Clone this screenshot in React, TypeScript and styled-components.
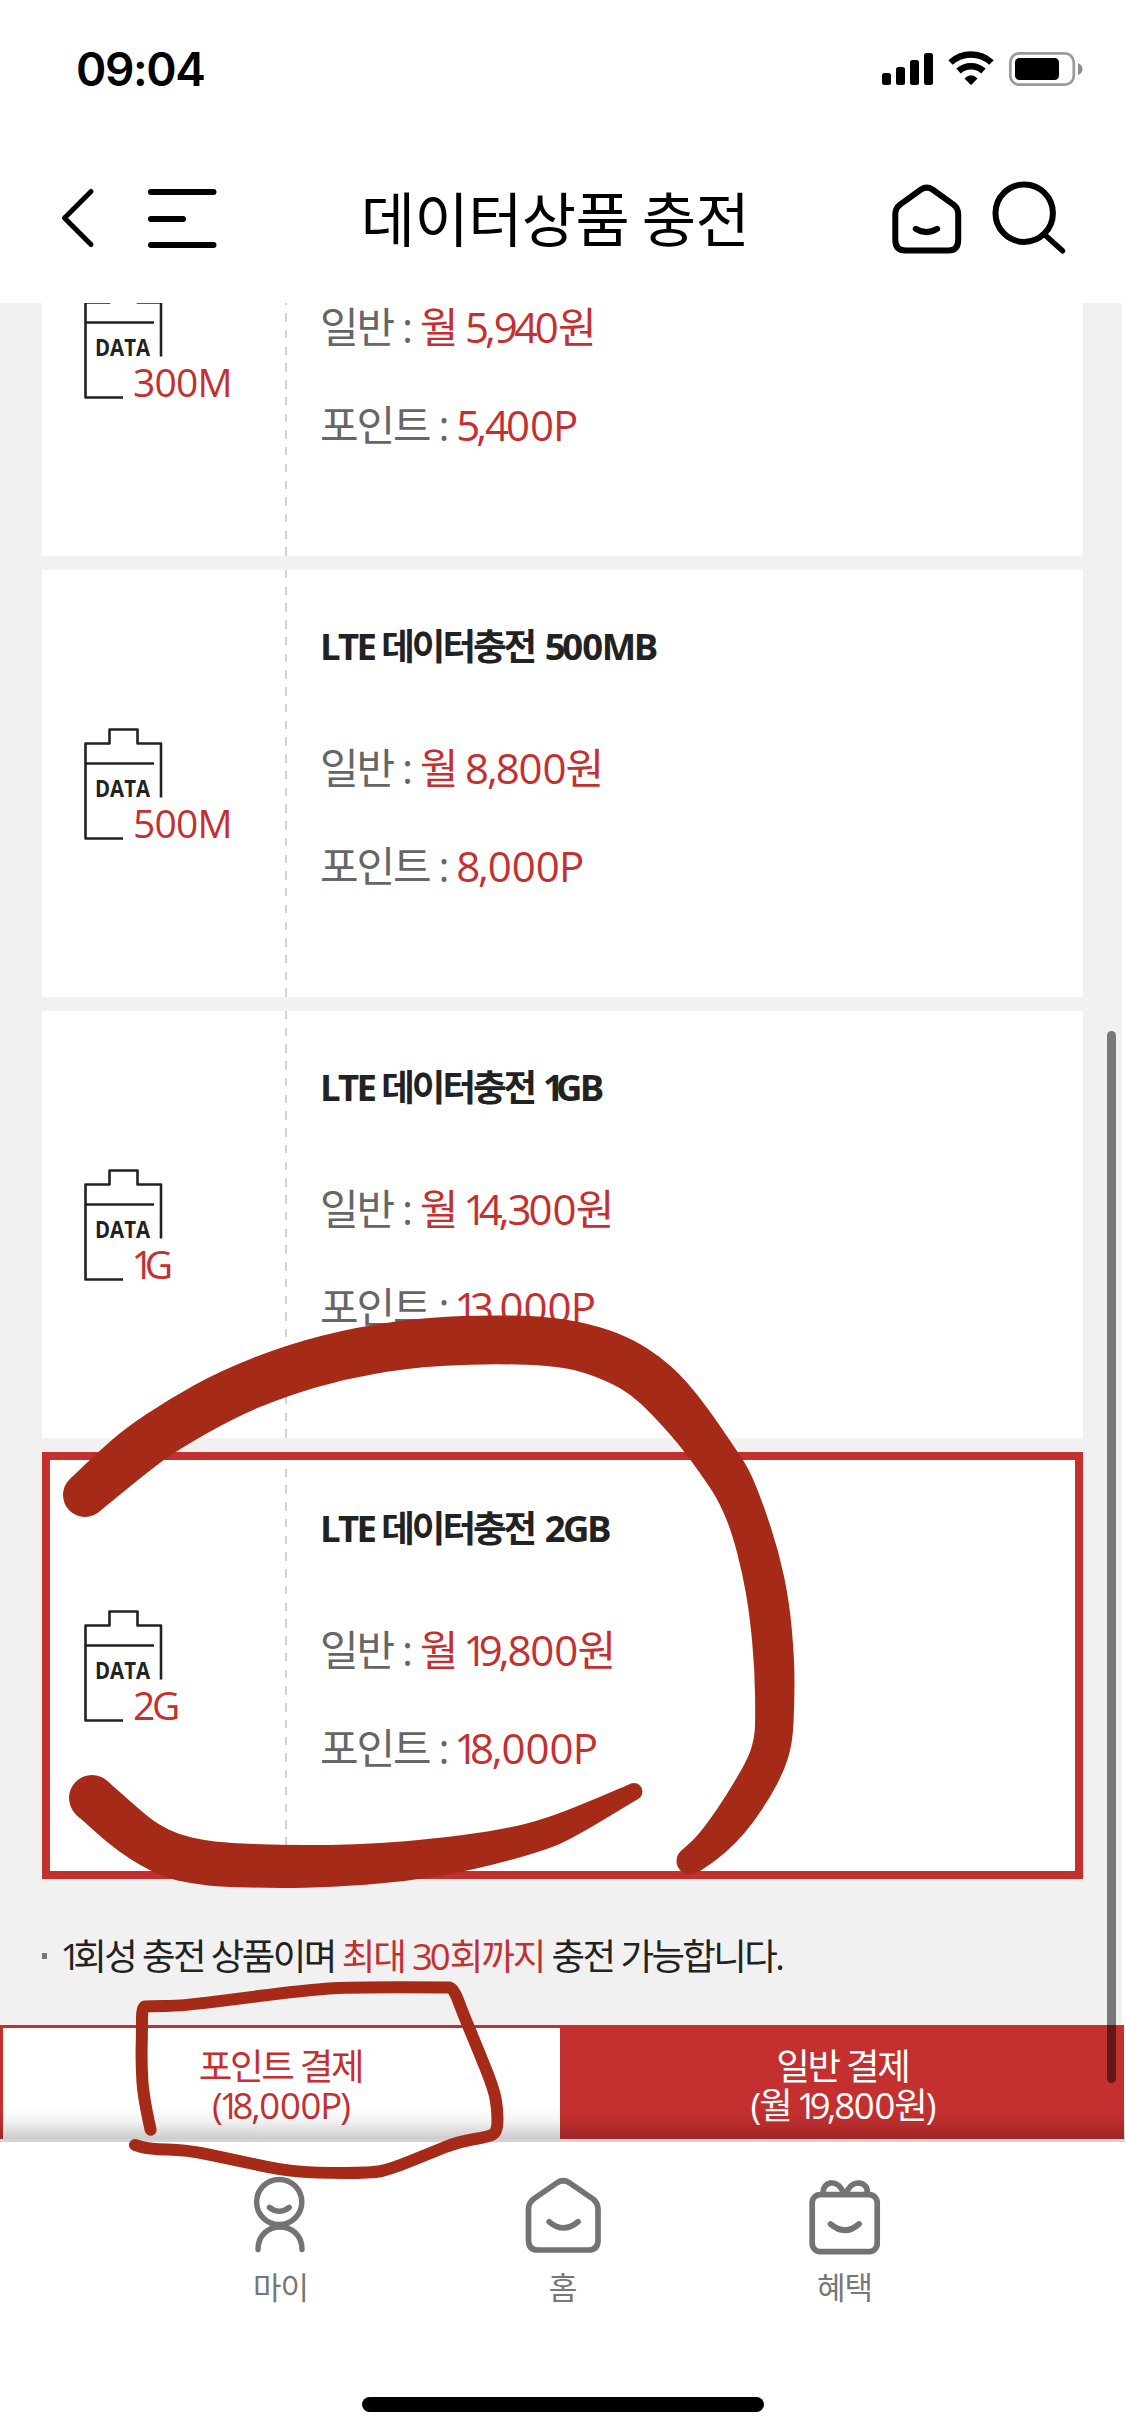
import React from "react";
import styled, { createGlobalStyle } from "styled-components";

const RED = "#c43030";
const INK = "#a52a17";
const GRAY = "#737373";

const GlobalStyle = createGlobalStyle`
  * { box-sizing: border-box; }
  body { margin: 0; background: #fff; }
`;

const Screen = styled.div`
  position: relative;
  display: flex;
  flex-direction: column;
  width: 1125px;
  height: 2436px;
  overflow: hidden;
  background: #fff;
  color: #222;
  font-family: "Open Sans", "Noto Sans CJK KR", sans-serif;
`;

const StatusBar = styled.div`
  display: flex;
  justify-content: space-between;
  height: 132px;
  padding: 42px 42px 0 76px;
`;

const Clock = styled.div`
  height: 54px;
  line-height: 54px;
  font-family: Inter, sans-serif;
  font-size: 46px;
  font-weight: 600;
  letter-spacing: -1.4px;
  color: #000;
`;

const StatusIcons = styled.svg`
  width: 202px;
  height: 36px;
  margin-top: 9px;
`;

const Header = styled.header`
  display: grid;
  grid-template-columns: 300px 1fr 300px;
  align-items: center;
  height: 171px;
`;

const HeaderIcons = styled.svg`
  display: block;
  width: 300px;
  height: 171px;
`;

const PageTitle = styled.h1`
  margin: 0 0 0 -15px;
  padding-bottom: 1px;
  text-align: center;
  font-family: "Noto Sans CJK KR", sans-serif;
  font-size: 59px;
  font-weight: 400;
  line-height: 80px;
  letter-spacing: -0.6px;
  color: #000;
`;

const Content = styled.main`
  height: 1722px;
  overflow: hidden;
  padding: 0 39.5px 0 42px;
  border-right: 3px solid #fff;
  background: #f1f1f1;
`;

const ProductList = styled.ul`
  display: flex;
  flex-direction: column;
  gap: 14px;
  margin: -174px 0 0;
  padding: 0;
  list-style: none;
`;

const Card = styled.li<{ $selected?: boolean }>`
  display: grid;
  grid-template-columns: 243px 2px 1fr;
  height: 427px;
  background: #fff;
  outline: ${(p) => (p.$selected ? `8.5px solid ${RED}` : "none")};
  outline-offset: -8.5px;
`;

const IconCell = styled.div`
  display: grid;
  padding: 157px 0 0 41px;
  align-content: start;
`;

const Divider = styled.div`
  background: repeating-linear-gradient(#d2d2d2 0 8.4px, transparent 8.4px 16.74px);
`;

const Info = styled.div`
  padding: 52px 0 0 33px;
`;

const ProductName = styled.h2`
  margin: 0 0 62px;
  height: 48px;
  line-height: 48px;
  font-size: 36.5px;
  font-weight: 600;
  white-space: pre;
`;

const PriceRow = styled.div`
  height: 98px;
  line-height: 72px;
  font-size: 42px;
  color: #666;
  white-space: pre;
`;

const Run = styled.span<{ $ls: number; $color?: string }>`
  letter-spacing: ${(p) => p.$ls}px;
  color: ${(p) => p.$color || "inherit"};
`;

const Latin = styled.span`
  font-weight: 700;
`;

const Figure = styled.span<{ $before?: number; $after: number }>`
  margin-left: ${(p) => p.$before || 0}em;
  margin-right: ${(p) => p.$after}em;
`;

const BatterySvg = styled.svg`
  display: block;
  width: 180px;
  height: 120px;
  overflow: visible;
`;

const Note = styled.p`
  display: flex;
  align-items: center;
  gap: 15px;
  margin: 50px 0 0;
  height: 54px;
  font-size: 36.5px;
  line-height: 54px;
  white-space: pre;
`;

const Bullet = styled.i`
  width: 5px;
  height: 6px;
  background: #777;
`;

const PayBar = styled.div`
  position: relative;
  display: grid;
  grid-template-columns: 560px 564px;
  height: 117px;
  border-bottom: 3px solid #d3d3d3;

  &::after {
    content: "";
    position: absolute;
    inset: auto 0 0 0;
    height: 30px;
    background: linear-gradient(rgba(0, 0, 0, 0), rgba(0, 0, 0, 0.05) 40%, rgba(0, 0, 0, 0.2));
  }
`;

const PayButton = styled.button<{ $filled?: boolean }>`
  display: flex;
  flex-direction: column;
  align-items: center;
  margin: 0;
  padding: 19px 2px 0 0;
  border: solid ${RED};
  border-width: 3px 0 0 3px;
  border-radius: 0;
  background: ${(p) => (p.$filled ? RED : "#fff")};
  color: ${(p) => (p.$filled ? "#fff" : RED)};
  font: inherit;
  font-size: 36.5px;
  line-height: 39px;
  white-space: pre;
`;

const Nav = styled.nav`
  display: grid;
  grid-template-columns: repeat(3, 282px);
  justify-content: center;
  height: 255px;
  padding-top: 28px;
`;

const NavItem = styled.div`
  display: flex;
  flex-direction: column;
  align-items: center;
  color: #777;
  font-family: "Noto Sans CJK KR", sans-serif;
  font-size: 31px;
  font-weight: 400;
  letter-spacing: -1px;
  line-height: 46px;

  svg {
    width: 92px;
    height: 92px;
    margin-bottom: 1px;
  }
`;

const HomeIndicator = styled.div`
  align-self: center;
  width: 402px;
  height: 15px;
  border-radius: 8px;
  background: #000;
`;

const ScrollThumb = styled.div`
  position: absolute;
  left: 1107px;
  top: 1031px;
  width: 9px;
  height: 1052px;
  border-radius: 5px;
  background: rgba(0, 0, 0, 0.5);
`;

const InkLayer = styled.svg`
  position: absolute;
  inset: 0;
  width: 1125px;
  height: 2436px;
  pointer-events: none;
`;

type Point = [number, number];

/* Smooths a list of points with midpoint quadratic segments; a repeated point is passed through exactly. */
const smooth = (pts: Point[], closed: boolean): string => {
  const mid = (a: Point, b: Point): Point => [(a[0] + b[0]) / 2, (a[1] + b[1]) / 2];
  const n = pts.length;
  if (closed) {
    const start = mid(pts[n - 1], pts[0]);
    return (
      `M${start}` + pts.map((p, i) => `Q${p} ${mid(p, pts[(i + 1) % n])}`).join("") + "Z"
    );
  }
  return (
    `M${pts[0]}` +
    pts.slice(1, -1).map((p, i) => `Q${p} ${mid(p, pts[i + 2])}`).join("") +
    `L${pts[n - 1]}`
  );
};

const UPPER: Point[] = [
  [85, 1495], [70.5, 1478.5], [70.5, 1478.5], [97, 1453], [125.5, 1428], [168.6, 1399.5], [218.8, 1371.5], [287, 1344.5],
  [358.7, 1326.5], [430.4, 1317], [495, 1315], [552.4, 1316.5], [602.6, 1327], [634.9, 1340.5],
  [659, 1356], [682, 1376], [707, 1407], [733, 1445], [749, 1469], [762, 1500.8], [778.6, 1550.6],
  [789.5, 1602.4], [794.5, 1660.4], [794.5, 1702], [792.5, 1743.4], [784, 1771], [770, 1797.3],
  [753.5, 1822], [737, 1842], [716, 1860.3], [699, 1871.5], [699, 1871.5], [690, 1861],
  [681, 1851], [681, 1851], [697, 1836.7],
  [717, 1809.7], [736.5, 1778.6], [749, 1755.8], [754, 1739.2], [755.4, 1722.6], [754.7, 1668.7],
  [749.6, 1614.8], [742.5, 1573.4], [731.7, 1532], [719.5, 1503], [706.6, 1482.2], [678, 1442.8],
  [649.2, 1411.7], [631.3, 1395], [609.8, 1382.2], [573.9, 1368.8], [538, 1365], [495, 1364],
  [444.8, 1365.3], [401.7, 1369.4], [344.3, 1379], [287, 1396], [236.7, 1416.5], [179.3, 1449],
  [150.6, 1469.7], [99.5, 1511.5], [99.5, 1511.5],
];

const LOWER: Point[] = [
  [92, 1798], [75.5, 1814], [75.5, 1814], [118.4, 1852.5], [161.4, 1877], [193.7, 1884], [222.4, 1886.8],
  [279.8, 1888.3], [330, 1887], [401.7, 1882.3], [473.5, 1870.2], [545.2, 1850.5], [575, 1837],
  [638.8, 1798.5], [638.8, 1798.5], [634, 1791.5], [629.5, 1784.2], [629.5, 1784.2],
  [548.8, 1818.5], [495, 1831], [430.4, 1839],
  [380.2, 1843.3], [330, 1845], [279.8, 1845], [229.6, 1842.9], [204.4, 1840.4], [179.3, 1834.6],
  [157.8, 1824.2], [143.5, 1813], [108.5, 1782], [108.5, 1782],
];

const BOX: Point[] = [
  [150.6, 2129.8], [143.5, 2098.3], [141.3, 2064], [142, 2030], [142, 2006.5], [148, 2006.3], [183, 2005.8],
  [247.5, 1997.4], [315.6, 1989.2], [351.5, 1987.3], [444.8, 1987.3], [453.4, 1987.6], [462.7, 2012.8],
  [477, 2047], [493.5, 2088], [497.5, 2108.5], [497.5, 2132], [488, 2137], [459, 2141.5],
  [430.4, 2153], [391, 2169], [371.6, 2173], [315.6, 2173], [279.8, 2169.7], [229.6, 2158.8],
  [186.5, 2149.8], [148.5, 2149.2], [135, 2145],
];

const products = [
  { size: "300M", name: "300MB", won: "5,940", point: "5,400P" },
  { size: "500M", name: "500MB", won: "8,800", point: "8,000P" },
  { size: "1G", name: "1GB", won: "14,300", point: "13,000P" },
  { size: "2G", name: "2GB", won: "19,800", point: "18,000P", selected: true },
];

/* Sets figures proportionally: a narrow 1, a wide 0, the rest slightly tight. */
const Figures = ({ children }: { children: string }) => (
  <>
    {children.split(/(1|0|[3459])/).map((part, i) => {
      if (part === "1") return <Figure key={i} $before={-0.045} $after={-0.15}>1</Figure>;
      if (part === "0") return <Figure key={i} $before={0.02} $after={0.03}>0</Figure>;
      if (/^[3459]$/.test(part)) return <Figure key={i} $after={-0.045}>{part}</Figure>;
      return part;
    })}
  </>
);

const DataBattery = ({ label }: { label: string }) => (
  <BatterySvg viewBox="0 0 180 120">
    <g fill="none" stroke="#222" strokeWidth="2.6" strokeLinejoin="round">
      <path d="M40 111.5H2.5V16.5H26.5V2.5H54.5V16.5H78V70.5" />
      <path d="M2 36.5H71" />
    </g>
    <text x="12" y="70" fontSize="23.5" fontWeight="700" fill="#222" textLength="55" lengthAdjust="spacingAndGlyphs">DATA</text>
    {label === "1G" ? (
      <text x="48.5" y="111" fontSize="39" fill={RED}>1<tspan dx="-9">G</tspan></text>
    ) : (
      <text x="50" y="111" fontSize="39" fill={RED} letterSpacing={label.length > 2 ? -0.8 : -3.4}>{label}</text>
    )}
  </BatterySvg>
);

const ProductCard = ({ size, name, won, point, selected }: (typeof products)[number]) => (
  <Card $selected={selected}>
    <IconCell><DataBattery label={size} /></IconCell>
    <Divider />
    <Info>
      <ProductName>
        <Run $ls={-2.6}><Latin>LTE </Latin></Run>
        <Run $ls={-3}>데이터충전</Run>
        <Run $ls={1}> </Run>
        <Run $ls={-2.5}><Latin><Figures>{name}</Figures></Latin></Run>
      </ProductName>
      <PriceRow>
        <Run $ls={-2.1}>일반 : </Run>
        <Run $ls={-2.1} $color={RED}>월 <Figures>{won}</Figures>원</Run>
      </PriceRow>
      <PriceRow>
        <Run $ls={-2.1}>포인트 : </Run>
        <Run $ls={-2.1} $color={RED}><Figures>{point}</Figures></Run>
      </PriceRow>
    </Info>
  </Card>
);

export default function App() {
  return (
    <Screen>
      <GlobalStyle />
      <StatusBar>
        <Clock>09:04</Clock>
        <StatusIcons viewBox="0 0 202 36">
          <rect x="1" y="22" width="9" height="12" rx="2.5" />
          <rect x="15" y="16" width="9" height="18" rx="2.5" />
          <rect x="29" y="9" width="9" height="25" rx="2.5" />
          <rect x="43" y="2" width="9" height="32" rx="2.5" />
          <g fill="none" stroke="#000" strokeWidth="6.5">
            <path d="M69.5 11.5A30 30 0 0 1 110.5 11.5" />
            <path d="M77.5 20A18.5 18.5 0 0 1 102.5 20" />
          </g>
          <path d="M83.5 27.5Q90 21 96.5 27.5L91 33.3Q90 34.3 89 33.3Z" />
          <rect x="129.3" y="2.3" width="63.5" height="31.4" rx="9" fill="none" stroke="#9a9a9a" strokeWidth="2.7" />
          <rect x="134" y="7" width="44" height="22" rx="4.5" />
          <path d="M197 12Q201.5 14 201.5 18T197 24Z" fill="#8c8c8c" />
        </StatusIcons>
      </StatusBar>
      <Header>
        <HeaderIcons viewBox="0 0 300 171" fill="none" stroke="#000" strokeWidth="5" strokeLinecap="round">
          <path d="M91 59.5L64.5 86L91 112.5" strokeLinejoin="round" />
          <path d="M151 60H213.5M151 87H183M151 113H213.5" strokeWidth="6" />
        </HeaderIcons>
        <PageTitle>데이터상품 충전</PageTitle>
        <HeaderIcons viewBox="825 132 300 171" fill="none" stroke="#000" strokeWidth="6" strokeLinecap="round" strokeLinejoin="round">
          <g transform="translate(889.5 177)">
            <path d="M5.8 35V61Q5.8 71.8 16 71.8H59Q68.7 71.8 68.7 61V35Q68.7 29.5 64 25.8L43 10.7Q37.2 7 31.5 10.7L10.5 25.8Q5.8 29.5 5.8 35Z" transform="translate(0 1.8)" />
            <path d="M26.3 51.8Q37 58.5 47.7 51.8" />
          </g>
          <circle cx="1024.2" cy="213.2" r="28.7" />
          <path d="M1045 235L1062.5 250.8" strokeWidth="5.5" />
        </HeaderIcons>
      </Header>
      <Content>
        <ProductList>
          {products.map((p) => <ProductCard key={p.name} {...p} />)}
        </ProductList>
        <Note>
          <Bullet />
          <span>
            <Run $ls={-2.6}><Figures>1</Figures>회성 충전 상품이며 </Run>
            <Run $ls={-2.1} $color={RED}>최대 <Figures>30</Figures>회까지 </Run>
            <Run $ls={-2.6}>충전 가능합니다.</Run>
          </span>
        </Note>
      </Content>
      <PayBar>
        <PayButton>
          <Run $ls={-2.3}>포인트 결제</Run>
          <Run $ls={-2.1}>(<Figures>18,000P</Figures>)</Run>
        </PayButton>
        <PayButton $filled>
          <Run $ls={-2.3}>일반 결제</Run>
          <Run $ls={-2.1}>(월 <Figures>19,800</Figures>원)</Run>
        </PayButton>
      </PayBar>
      <Nav>
        <NavItem>
          <svg viewBox="234 2170 92 92" fill="none" stroke={GRAY} strokeWidth="5.5" strokeLinecap="round">
            <circle cx="278.2" cy="2202" r="22.6" />
            <path d="M268.5 2207.5Q278.3 2215 288.2 2207.5M257 2249.5C257 2219.5 301 2219.5 301 2249.5" />
          </svg>
          마이
        </NavItem>
        <NavItem>
          <svg viewBox="516.5 2170 92 92" fill="none" stroke={GRAY} strokeWidth="5.7" strokeLinecap="round" strokeLinejoin="round">
            <path d="M528 2209V2240Q528 2250 537 2250H588Q597.5 2250 597.5 2240V2209Q597.5 2203 592.5 2199L568.5 2182.5Q562.8 2179 557 2182.5L533 2199Q528 2203 528 2209Z" />
            <path d="M548.7 2221.8Q563 2234 577.5 2221.8" />
          </svg>
          홈
        </NavItem>
        <NavItem>
          <svg viewBox="799 2170 92 92" fill="none" stroke={GRAY} strokeWidth="5.7" strokeLinecap="round" strokeLinejoin="round">
            <rect x="812.2" y="2194.6" width="65" height="57" rx="8" />
            <path d="M830.5 2224Q845 2236.5 859 2224M823 2193C823 2181 836 2180 841.5 2189L844.8 2194L848.5 2189C854 2180 867.5 2181 867.5 2193" />
          </svg>
          혜택
        </NavItem>
      </Nav>
      <HomeIndicator />
      <ScrollThumb />
      <InkLayer viewBox="0 0 1125 2436" fill={INK}>
        <path d={smooth(UPPER, true)} />
        <circle cx="85" cy="1495" r="22" />
        <circle cx="690" cy="1861" r="13.5" />
        <path d={smooth(LOWER, true)} />
        <circle cx="92" cy="1798" r="23" />
        <circle cx="634" cy="1791.5" r="8.5" />
        <path d={smooth(BOX, false)} fill="none" stroke={INK} strokeWidth="12" strokeLinecap="round" strokeLinejoin="round" />
      </InkLayer>
    </Screen>
  );
}
